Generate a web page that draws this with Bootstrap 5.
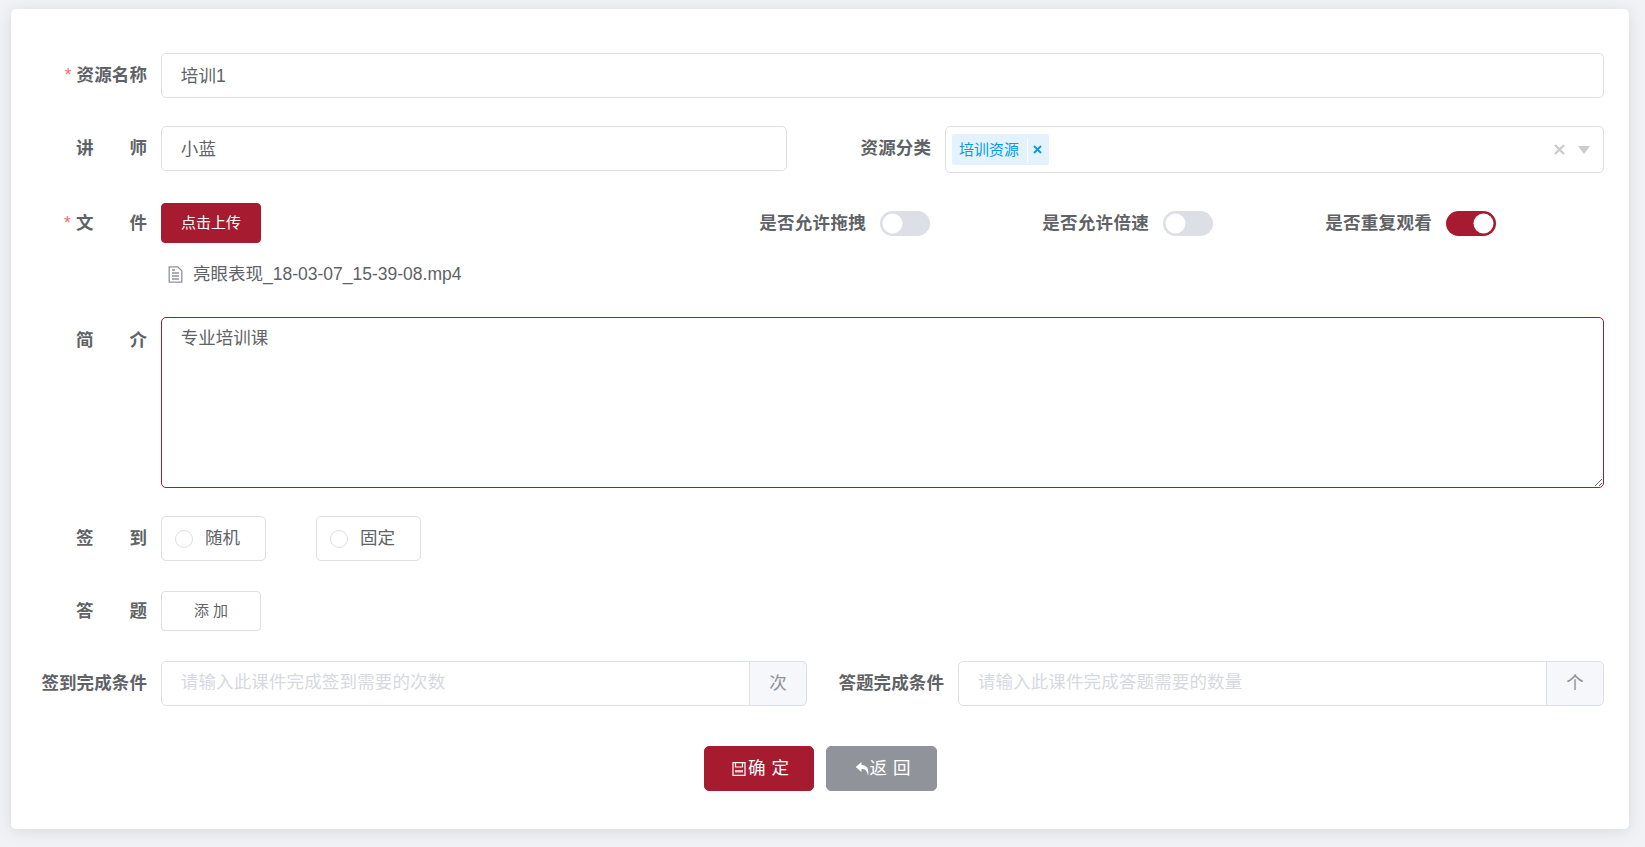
<!DOCTYPE html>
<html lang="zh-CN">
<head>
<meta charset="utf-8">
<title>资源</title>
<link rel="stylesheet" href="https://cdn.jsdelivr.net/npm/bootstrap@5.3.0/dist/css/bootstrap.min.css">
<style>
body{background:#f0f2f5;font-family:"Liberation Sans","Noto Sans CJK SC",sans-serif;font-size:17.5px;color:#606266;padding:9px 16px 18px 11px;overflow:hidden}
.sheet{height:820px;background:#fff;border:0;border-radius:5px;box-shadow:0 2px 15px rgba(0,0,0,.1);padding:44px 25px 38px 0}
.line{display:flex;align-items:center}
.line-top{align-items:flex-start}
.gap28{margin-bottom:28px}.gap30{margin-bottom:30px}.gap40{margin-bottom:40px}
.lbl{width:136px;margin:0 14px 0 0;flex:none;display:flex;justify-content:flex-end;align-items:center;font-weight:700;color:#606266;line-height:1.2;letter-spacing:.1px}
.lbl-h{height:45px}
.spread{width:71px;display:flex;justify-content:space-between}
.memo-lbl{margin-top:13px}
.req{color:#f56c6c;font-weight:400;font-size:17.5px;margin-right:5px}
.fm-input.form-control{height:45px;border:1.25px solid #dcdfe6;border-radius:5px;padding:0 18.75px 2px;font-size:17.5px;color:#606266;box-shadow:none;letter-spacing:.14px}
.fm-input::placeholder{color:#d6d9df;opacity:1}
.fm-input.form-control:focus{box-shadow:none;border-color:#dcdfe6;color:#606266}
.lefthalf{width:626px;flex:none}
.lbl-mid{width:144px}
.chooser{height:47px;flex:1;border:1.25px solid #dcdfe6;border-radius:5px;padding:0 13px 0 6px;display:flex;align-items:center}
.chip{height:31px;width:97px;background:#e3f2fd;color:#039be5;font-size:15px;border-radius:2.5px;display:flex;align-items:center;padding-left:7px}
.chip-txt{width:68px;line-height:1}
.chip-x{height:24px;border-left:1px solid #fff;flex:1;display:flex;align-items:center;justify-content:center;padding-right:2px}
.tools{margin-left:auto;display:flex;align-items:center;gap:13.5px}
.btn.b-red{background:#a61b2f;border:1.25px solid #a61b2f;color:#fff}
.btn.b-small{width:100px;height:40px;font-size:15px;padding:0 0 2px;border-radius:4px;line-height:1}
.btn.b-plain{background:#fff;border:1.25px solid #dcdfe6;color:#606266}
.btn.b-grey{background:#909399;border:1.25px solid #909399;color:#fff}
.btn.b-large{height:45px;font-size:17.5px;padding:0;border-radius:5px;display:inline-flex;align-items:center;justify-content:center;line-height:1;word-spacing:1px}
.toggle-cell{display:flex;align-items:center;justify-content:flex-end;gap:14px;width:283px;font-weight:700;letter-spacing:.3px}
.toggle-first{width:669px}
.tog.form-check-input{width:50px;height:25px;margin:0;border:0;border-radius:12.5px;background-color:#dcdfe6;background-image:url("data:image/svg+xml,%3Csvg xmlns='http://www.w3.org/2000/svg' viewBox='0 0 50 25'%3E%3Ccircle cx='12.5' cy='12.5' r='10' fill='%23fff'/%3E%3C/svg%3E");background-size:50px 25px;background-position:0 0;box-shadow:none}
.tog.form-check-input:checked{background-color:#a61b2f;background-image:url("data:image/svg+xml,%3Csvg xmlns='http://www.w3.org/2000/svg' viewBox='0 0 50 25'%3E%3Ccircle cx='37.5' cy='12.5' r='10' fill='%23fff'/%3E%3C/svg%3E");background-position:0 0;background-size:50px 25px}
.filename{height:74px;margin-left:150px;padding-left:7px;display:flex;align-items:center;gap:10px;padding-bottom:12px}
.memo.form-control{height:171px;border:1.25px solid #a61b2f;border-radius:5px;padding:7px 18.75px;font-size:17.5px;line-height:1.5;color:#606266;box-shadow:none;flex:1;caret-color:#333;background:#fff}
.memo.form-control:focus{border-color:#a61b2f;box-shadow:none}
.pick{width:105px;height:45px;border:1.25px solid #dcdfe6;border-radius:5px;display:flex;align-items:center;gap:12px;padding-left:13px;margin:0 50px 0 0;cursor:pointer}
.pick .form-check-input{width:18px;height:18px;margin:0;border:1.25px solid #dcdfe6;box-shadow:none}
.cond-a{width:646px;flex:none}
.cond-b{flex:1}
.lbl-cond{width:136px;margin-left:1px}
.input-group .input-group-text.unit{width:58px;justify-content:center;background:#f5f7fa;border:1.25px solid #dcdfe6;color:#909399;font-size:17.5px;padding:0;border-radius:0 5px 5px 0;margin-left:-1.25px}
.input-group .fm-input.form-control{border-radius:5px 0 0 5px}
.actions{display:flex;justify-content:center;gap:12px;padding-left:26px}
.btn.b-large.act-ok{width:110px;gap:2px;padding-left:3px}
.btn.b-large.act-back{width:111px;gap:0;padding-left:2px}
</style>
</head>
<body>
<form class="card sheet">
  <div class="line gap28">
    <label class="lbl"><span class="req">*</span>资源名称</label>
    <input class="form-control fm-input" value="培训1">
  </div>
  <div class="line line-top gap30">
    <label class="lbl lbl-h"><span class="spread"><span>讲</span><span>师</span></span></label>
    <div class="lefthalf"><input class="form-control fm-input" value="小蓝"></div>
    <label class="lbl lbl-mid lbl-h">资源分类</label>
    <div class="chooser">
      <div class="chip"><span class="chip-txt">培训资源</span><span class="chip-x"><svg width="9" height="9" viewBox="0 0 9 9"><path d="M1 1l7 7M8 1L1 8" stroke="#039be5" stroke-width="1.8"/></svg></span></div>
      <div class="tools">
        <svg width="11" height="11" viewBox="0 0 11 11"><path d="M1 1l9 9M10 1l-9 9" stroke="#ccc" stroke-width="2.4"/></svg>
        <svg width="12" height="8" viewBox="0 0 12 8"><path d="M0 0h12L6 8z" fill="#ccc"/></svg>
      </div>
    </div>
  </div>
  <div class="line">
    <label class="lbl"><span class="req">*</span><span class="spread"><span>文</span><span>件</span></span></label>
    <button type="button" class="btn b-red b-small">点击上传</button>
    <div class="toggle-cell toggle-first">是否允许拖拽<input class="form-check-input tog" type="checkbox" role="switch"></div>
    <div class="toggle-cell">是否允许倍速<input class="form-check-input tog" type="checkbox" role="switch"></div>
    <div class="toggle-cell">是否重复观看<input class="form-check-input tog" type="checkbox" role="switch" checked></div>
  </div>
  <div class="filename">
    <svg width="15" height="17" viewBox="0 0 15 17" fill="none" stroke="#909399" stroke-width="1.3"><path d="M1.2 .8h8.6l4 4v11.400H1.200z"/><path d="M4 7h7M4 10h7M4 13h7M4 4h3"/></svg>
    <span>亮眼表现_18-03-07_15-39-08.mp4</span>
  </div>
  <div class="line line-top gap28">
    <label class="lbl"><span class="spread memo-lbl"><span>简</span><span>介</span></span></label>
    <textarea id="memo" class="form-control memo">专业培训课</textarea>
  </div>
  <div class="line gap30">
    <label class="lbl"><span class="spread"><span>签</span><span>到</span></span></label>
    <label class="pick"><input class="form-check-input" type="radio" name="sign">随机</label>
    <label class="pick"><input class="form-check-input" type="radio" name="sign">固定</label>
  </div>
  <div class="line gap30">
    <label class="lbl"><span class="spread"><span>答</span><span>题</span></span></label>
    <button type="button" class="btn b-plain b-small">添 加</button>
  </div>
  <div class="line gap40">
    <label class="lbl">签到完成条件</label>
    <div class="input-group cond-a">
      <input class="form-control fm-input" placeholder="请输入此课件完成签到需要的次数">
      <span class="input-group-text unit">次</span>
    </div>
    <label class="lbl lbl-cond">答题完成条件</label>
    <div class="input-group cond-b">
      <input class="form-control fm-input" placeholder="请输入此课件完成答题需要的数量">
      <span class="input-group-text unit">个</span>
    </div>
  </div>
  <div class="actions">
    <button type="button" class="btn b-red b-large act-ok"><svg width="14" height="14" viewBox="0 0 14 14"><path d="M1 .7h12v12.600H1z" fill="none" stroke="#fff" stroke-width="1.200"/><path d="M3.500 1v4h7V1" fill="none" stroke="#fff" stroke-width="1.200"/><path d="M3 8h8v2.500H3z" fill="#fff" opacity=".75"/></svg>确 定</button>
    <button type="button" class="btn b-grey b-large act-back"><svg width="15" height="15" viewBox="0 0 15 15"><path d="M6.500 1L.7 6l5.800 5V8c3.500 0 5.500 1 6.500 6.500C14.600 8 12 3.900 6.500 3.900z" fill="#fff"/></svg>返 回</button>
  </div>
</form>
<script src="https://cdn.jsdelivr.net/npm/bootstrap@5.3.0/dist/js/bootstrap.bundle.min.js"></script>
<script>
var m=document.getElementById('memo');m.focus();m.setSelectionRange(m.value.length,m.value.length);
</script>
</body>
</html>
